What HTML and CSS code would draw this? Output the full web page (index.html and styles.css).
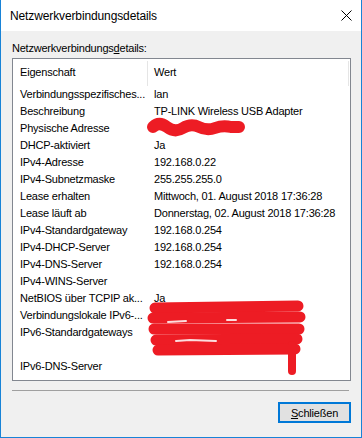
FILE: index.html
```html
<!DOCTYPE html>
<html lang="de">
<head>
<meta charset="utf-8">
<title>Netzwerkverbindungsdetails</title>
<link rel="stylesheet" href="styles.css">
</head>
<body>
<div class="window">
  <div class="titlebar">
    <span class="title">Netzwerkverbindungsdetails</span>
    <svg class="close" width="11" height="11" viewBox="0 0 11 11"><path d="M0.5 0.5L10.5 10.5M10.5 0.5L0.5 10.5" stroke="#000" stroke-width="1" fill="none"/></svg>
  </div>
  <div class="client">
    <div class="label">Netzwerkverbindungs<u>d</u>etails:</div>
    <div class="list">
      <div class="header"><div class="hcell c1">Eigenschaft</div><div class="hcell c2">Wert</div></div>
      <div class="row"><div class="cell c1">Verbindungsspezifisches...</div><div class="cell c2">lan</div></div>
      <div class="row"><div class="cell c1">Beschreibung</div><div class="cell c2">TP-LINK Wireless USB Adapter</div></div>
      <div class="row"><div class="cell c1">Physische Adresse</div><div class="cell c2"></div></div>
      <div class="row"><div class="cell c1">DHCP-aktiviert</div><div class="cell c2">Ja</div></div>
      <div class="row"><div class="cell c1">IPv4-Adresse</div><div class="cell c2">192.168.0.22</div></div>
      <div class="row"><div class="cell c1">IPv4-Subnetzmaske</div><div class="cell c2">255.255.255.0</div></div>
      <div class="row"><div class="cell c1">Lease erhalten</div><div class="cell c2">Mittwoch, 01. August 2018 17:36:28</div></div>
      <div class="row"><div class="cell c1">Lease läuft ab</div><div class="cell c2">Donnerstag, 02. August 2018 17:36:28</div></div>
      <div class="row"><div class="cell c1">IPv4-Standardgateway</div><div class="cell c2">192.168.0.254</div></div>
      <div class="row"><div class="cell c1">IPv4-DHCP-Server</div><div class="cell c2">192.168.0.254</div></div>
      <div class="row"><div class="cell c1">IPv4-DNS-Server</div><div class="cell c2">192.168.0.254</div></div>
      <div class="row"><div class="cell c1">IPv4-WINS-Server</div><div class="cell c2"></div></div>
      <div class="row"><div class="cell c1">NetBIOS über TCPIP ak...</div><div class="cell c2">Ja</div></div>
      <div class="row"><div class="cell c1">Verbindungslokale IPv6-...</div><div class="cell c2"></div></div>
      <div class="row"><div class="cell c1">IPv6-Standardgateways</div><div class="cell c2"></div></div>
      <div class="row"><div class="cell c1"></div><div class="cell c2"></div></div>
      <div class="row"><div class="cell c1">IPv6-DNS-Server</div><div class="cell c2"></div></div>
    </div>
    <div class="sep"></div>
    <div class="buttons"><button class="btn"><u>S</u>chließen</button></div>
  </div>
  <svg class="redact" width="362" height="438" viewBox="0 0 362 438">
    <g fill="none" stroke="#ed1c24" stroke-linecap="round" stroke-linejoin="round">
      <path d="M153 127 Q159 121 167 127 T183 128 T199 127 T215 128 T231 127 L239 127" stroke-width="12"/>
      <path d="M155 308 L298 306" stroke-width="11"/>
      <path d="M153 318 L300 317" stroke-width="11"/>
      <path d="M154 329 L299 329" stroke-width="11"/>
      <path d="M156 340 L297 339" stroke-width="11"/>
      <path d="M158 350 L295 349" stroke-width="11"/>
      <path d="M292 345 L292 371" stroke-width="8"/>
    </g>
    <g stroke="#fff" stroke-width="2" stroke-linecap="round" fill="none" opacity="0.85">
      <path d="M168 322 L186 321"/>
      <path d="M227 320 L236 320"/>
      <path d="M176 341 L190 340 L216 341"/>
    </g>
  </svg>
</div>
</body>
</html>
```

FILE: styles.css
```css
html, body {
  margin: 0;
  padding: 0;
}
body {
  width: 362px;
  height: 438px;
  overflow: hidden;
  background: #ffffff;
  font-family: "Liberation Sans", Arial, sans-serif;
  color: #000;
}
.window {
  position: relative;
  box-sizing: border-box;
  width: 362px;
  height: 438px;
  border: 1px solid #1883d7;
  border-top: 0;
  background: #f0f0f0;
  display: flex;
  flex-direction: column;
}
.titlebar {
  height: 31px;
  flex: none;
  background: #ffffff;
  display: flex;
  align-items: center;
  justify-content: space-between;
  padding: 0 9px 0 9px;
  font-size: 12px;
}
.title {
  line-height: 16px;
  letter-spacing: -0.12px;
}
.close {
  display: block;
}
.client {
  flex: 1;
  display: flex;
  flex-direction: column;
  padding: 11px 10px 0 11px;
}
.label {
  font-size: 11px;
  line-height: 13px;
  height: 13px;
  letter-spacing: -0.22px;
}
.list {
  margin-top: 3px;
  height: 323px;
  box-sizing: border-box;
  border: 1px solid #828790;
  background: #ffffff;
  overflow: hidden;
}
.header {
  display: flex;
  height: 27px;
}
.hcell {
  position: relative;
  box-sizing: border-box;
  font-size: 11px;
  line-height: 27px;
  letter-spacing: -0.2px;
  white-space: nowrap;
}
.hcell::after {
  content: "";
  position: absolute;
  right: 0;
  top: 2px;
  bottom: 0;
  width: 1px;
  background: #e5e5e5;
}
.row {
  display: flex;
  height: 17px;
}
.cell {
  box-sizing: border-box;
  font-size: 11px;
  line-height: 17px;
  letter-spacing: -0.2px;
  white-space: nowrap;
  overflow: hidden;
}
.c1 {
  width: 135px;
  padding-left: 7px;
  flex: none;
}
.c2 {
  width: 201px;
  padding-left: 6px;
  flex: none;
}
.sep {
  margin-top: 9px;
  height: 1px;
  width: 337px;
  background: #a0a0a0;
}
.buttons {
  display: flex;
  justify-content: flex-end;
  margin-top: 11px;
}
.btn {
  box-sizing: border-box;
  width: 73px;
  height: 21px;
  border: 2px solid #0078d7;
  background: #e1e1e1;
  font-family: "Liberation Sans", Arial, sans-serif;
  font-size: 11px;
  letter-spacing: -0.2px;
  color: #000;
  padding: 0;
  margin: 0;
}
.redact {
  position: absolute;
  left: -1px;
  top: 0;
  pointer-events: none;
}
```
